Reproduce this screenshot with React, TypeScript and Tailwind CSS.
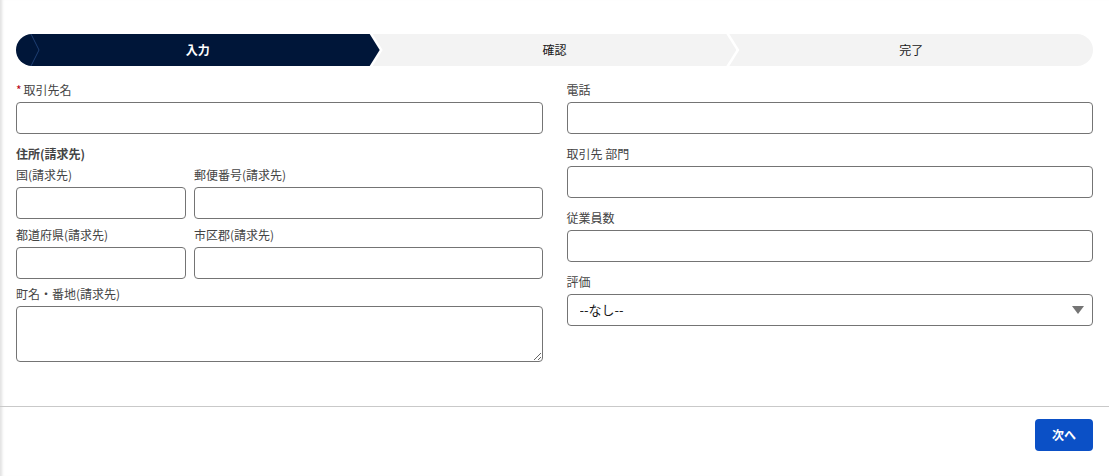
import React from 'react';

const steps = [
  { label: '入力', state: 'active' },
  { label: '確認', state: 'todo' },
  { label: '完了', state: 'todo' },
];

// chevron shapes for the path bar
const shapeFirst = '[clip-path:polygon(0_0,calc(100%-10px)_0,100%_50%,calc(100%-10px)_100%,0_100%)]';
const shapeMiddle = '[clip-path:polygon(0_0,calc(100%-10px)_0,100%_50%,calc(100%-10px)_100%,0_100%,10px_50%)]';
const shapeLast = '[clip-path:polygon(0_0,100%_0,100%_100%,0_100%,10px_50%)]';

const Label: React.FC<{ text: string; required?: boolean }> = ({ text, required }) => (
  <div className="text-[12px] leading-[18px] text-[#444444]">
    {required && <abbr className="mr-[2px] text-[#ba0517] no-underline">*</abbr>}
    {text}
  </div>
);

const TextInput: React.FC = () => (
  <input
    type="text"
    className="mt-[3px] block h-8 w-full rounded-[4px] border border-[#747474] bg-white px-3 text-[13px] outline-none"
  />
);

const Field: React.FC<{ label: string; required?: boolean }> = ({ label, required }) => (
  <div>
    <Label text={label} required={required} />
    <TextInput />
  </div>
);

const PathBar: React.FC = () => (
  <div className="flex h-8 overflow-hidden rounded-full">
    {steps.map((s, i) => {
      const shape = i === 0 ? shapeFirst : i === steps.length - 1 ? shapeLast : shapeMiddle;
      const active = s.state === 'active';
      return (
        <div
          key={s.label}
          className={`relative flex flex-1 items-center justify-center text-[12px] ${shape} ${
            i > 0 ? '-ml-[7px]' : ''
          } ${active ? 'bg-[#001639] font-bold text-white' : 'bg-[#f3f3f3] text-[#181818]'}`}
        >
          {i === 0 && (
            <svg className="absolute left-[14px] top-0 h-8 w-[10px]" viewBox="0 0 10 32" fill="none">
              <path d="M1 0 L9 16 L1 32" stroke="#1e3f73" strokeWidth="1" />
            </svg>
          )}
          {s.label}
        </div>
      );
    })}
  </div>
);

export default function App() {
  return (
    <div className="min-h-[476px] w-full bg-white font-['Noto_Sans_CJK_JP','Noto_Sans',sans-serif] shadow-[inset_4px_0_3px_-2px_rgba(0,0,0,0.12)]">
      <div className="px-4 pt-[34px]">
        <PathBar />

        <div className="mt-[15px] grid grid-cols-2 gap-x-6">
          {/* left column */}
          <div>
            <Field label="取引先名" required />

            <div className="mt-[11px] text-[12px] font-bold leading-[18px] text-[#444444]">住所(請求先)</div>
            <div className="mt-[3px] grid grid-cols-[170px_1fr] gap-x-2 gap-y-[7px]">
              <Field label="国(請求先)" />
              <Field label="郵便番号(請求先)" />
              <Field label="都道府県(請求先)" />
              <Field label="市区郡(請求先)" />
            </div>
            <div className="mt-[6px]">
              <Label text="町名・番地(請求先)" />
              <textarea className="mt-[3px] block h-[56px] w-full rounded-[4px] border border-[#747474] bg-white px-3 py-1 text-[13px] outline-none" />
            </div>
          </div>

          {/* right column */}
          <div className="flex flex-col gap-[11px]">
            <Field label="電話" />
            <Field label="取引先 部門" />
            <Field label="従業員数" />
            <div>
              <Label text="評価" />
              <div className="relative mt-[3px]">
                <select className="block h-8 w-full appearance-none rounded-[4px] border border-[#747474] bg-white pl-3 pr-8 text-[13px] text-[#181818] outline-none">
                  <option>--なし--</option>
                </select>
                <svg className="pointer-events-none absolute right-[9px] top-[12px] h-[8px] w-[12px]" viewBox="0 0 12 8">
                  <path d="M0 0 H12 L6 8 Z" fill="#747474" />
                </svg>
              </div>
            </div>
          </div>
        </div>
      </div>

      <div className="mt-[44px] border-t border-[#c9c9c9]">
        <div className="flex justify-end px-4 pt-3 pb-6">
          <button className="h-8 w-[58px] rounded-[4px] bg-[#0b50c6] text-[12px] font-bold text-white">次へ</button>
        </div>
      </div>
    </div>
  );
}
